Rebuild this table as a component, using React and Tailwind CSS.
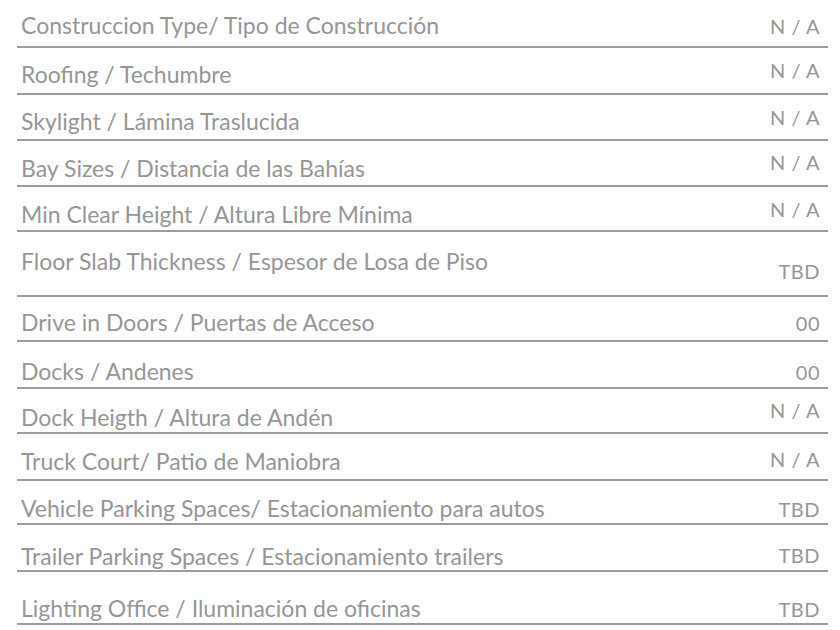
import React from 'react';

// each row: height incl. rule, then the gap between the text and the rule
const rows = [
  { label: 'Construccion Type/ Tipo de Construcción', value: 'N / A', h: 'h-[48px]', lb: 'mb-[9px]', vb: 'mb-[10px]' },
  { label: 'Roofing / Techumbre', value: 'N / A', h: 'h-[47px]', lb: 'mb-[7px]', vb: 'mb-[13px]' },
  { label: 'Skylight / Lámina Traslucida', value: 'N / A', h: 'h-[46px]', lb: 'mb-[6px]', vb: 'mb-[12px]' },
  { label: 'Bay Sizes / Distancia de las Bahías', value: 'N / A', h: 'h-[46px]', lb: 'mb-[5px]', vb: 'mb-[13px]' },
  { label: 'Min Clear Height / Altura Libre Mínima', value: 'N / A', h: 'h-[45px]', lb: 'mb-[4px]', vb: 'mb-[11px]' },
  { label: 'Floor Slab Thickness / Espesor de Losa de Piso', value: 'TBD', h: 'h-[65px]', lb: 'mb-[22px]', vb: 'mb-[14px]' },
  { label: 'Drive in Doors / Puertas de Acceso', value: '00', h: 'h-[45px]', lb: 'mb-[6px]', vb: 'mb-[7px]' },
  { label: 'Docks / Andenes', value: '00', h: 'h-[47px]', lb: 'mb-[4px]', vb: 'mb-[5px]' },
  { label: 'Dock Heigth / Altura de Andén', value: 'N / A', h: 'h-[45px]', lb: 'mb-[3px]', vb: 'mb-[12px]' },
  { label: 'Truck Court/ Patio de Maniobra', value: 'N / A', h: 'h-[47px]', lb: 'mb-[6px]', vb: 'mb-[10px]' },
  { label: 'Vehicle Parking Spaces/ Estacionamiento para autos', value: 'TBD', h: 'h-[44px]', lb: 'mb-[3px]', vb: 'mb-[4px]' },
  { label: 'Trailer Parking Spaces / Estacionamiento trailers', value: 'TBD', h: 'h-[47px]', lb: 'mb-[2px]', vb: 'mb-[5px]' },
  { label: 'Lighting Office / Iluminación de oficinas', value: 'TBD', h: 'h-[53px]', lb: 'mb-[3px]', vb: 'mb-[4px]' },
];

export default function App() {
  return (
    <div className="w-[840px] h-[630px] bg-white overflow-hidden pl-[17px] pr-[12px] font-['Lato',sans-serif] text-[#969696]">
      {rows.map((r, i) => (
        <div key={i} className={`${r.h} flex items-end justify-between border-b-2 border-[#9c9c9c] pl-1 pr-2`}>
          <span className={`${r.lb} text-[23px] leading-none`}>{r.label}</span>
          <span className={`${r.vb} text-[20px] leading-none tracking-[0.5px]`}>{r.value}</span>
        </div>
      ))}
    </div>
  );
}
